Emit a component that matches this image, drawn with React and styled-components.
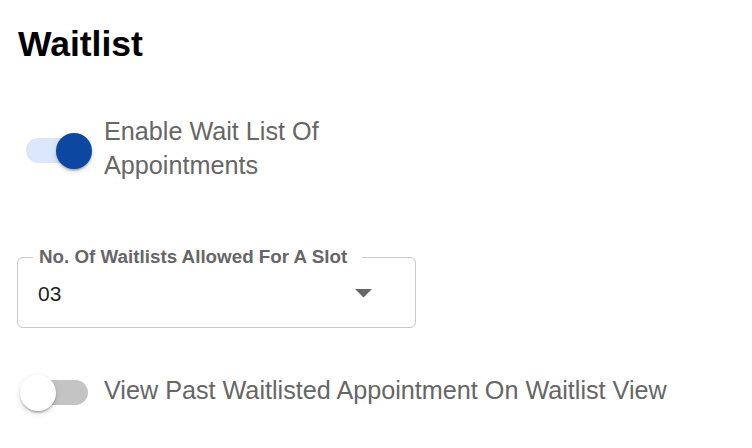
import styled, { createGlobalStyle } from 'styled-components'

const GlobalStyle = createGlobalStyle`
  html, body {
    margin: 0;
    background: #fff;
  }
  body {
    font-family: "Liberation Sans", Arial, Helvetica, sans-serif;
  }
`

const Page = styled.div`
  width: 752px;
  height: 448px;
  box-sizing: border-box;
  padding: 21.5px 0 0 17px;
  overflow: hidden;
`

const Title = styled.h1`
  margin: 0 0 0 1px;
  font-size: 35.5px;
  line-height: 44px;
  font-weight: 700;
  color: #000;
`

const Row = styled.label`
  display: flex;
  align-items: center;
  gap: 12px;
  margin-top: ${(p) => p.$top}px;
  cursor: pointer;
`

const Text = styled.span`
  max-width: ${(p) => p.$max || 'none'};
  font-size: 25.2px;
  line-height: 34px;
  color: #666;
`

// switch: track + thumb lying over it
const SwitchBox = styled.span`
  position: relative;
  flex: none;
  width: 72px;
  height: 36px;
  margin: 5px 0 0 3px;
`

const Track = styled.span`
  position: absolute;
  left: 5.5px;
  right: 4px;
  top: 5.5px;
  height: 25px;
  border-radius: 13px;
  background: ${(p) => (p.$on ? '#dbe7fb' : '#c4c4c4')};
`

const Thumb = styled.span`
  position: absolute;
  top: 0;
  left: ${(p) => (p.$on ? '36px' : '0')};
  width: 36px;
  height: 36px;
  border-radius: 50%;
  background: ${(p) => (p.$on ? '#0c47a1' : '#fff')};
  box-shadow: 0 3px 2px -2px rgba(0, 0, 0, 0.2), 0 2px 2px 0 rgba(0, 0, 0, 0.14),
    0 2px 6px 0 rgba(0, 0, 0, 0.14);
`

const Switch = ({ on }) => (
  <SwitchBox>
    <Track $on={on} />
    <Thumb $on={on} />
  </SwitchBox>
)

const Field = styled.fieldset`
  box-sizing: border-box;
  width: 399px;
  margin: 65px 0 0 0;
  padding: 0 15px 21px 15px;
  border: 1px solid #c8c8c8;
  border-radius: 6px;
`

const Legend = styled.legend`
  padding: 0 15px 0 6px;
  font-size: 18.8px;
  line-height: 20px;
  font-weight: 700;
  color: #666;
`

const SelectRow = styled.div`
  display: flex;
  align-items: center;
  justify-content: space-between;
  height: 24px;
  margin-top: 14.5px;
  padding: 0 28px 0 5px;
`

const Value = styled.span`
  font-size: 21px;
  line-height: 24px;
  color: #1f1f1f;
`

const Arrow = () => (
  <svg width="17" height="9" viewBox="0 0 17 9">
    <polygon points="0,0 17,0 8.5,8.5" fill="#666" />
  </svg>
)

const App = () => {
  return (
    <Page>
      <GlobalStyle />
      <Title>Waitlist</Title>

      <Row $top={48.8}>
        <Switch on />
        <Text $max="240px">Enable Wait List Of Appointments</Text>
      </Row>

      <Field>
        <Legend>No. Of Waitlists Allowed For A Slot</Legend>
        <SelectRow>
          <Value>03</Value>
          <Arrow />
        </SelectRow>
      </Field>

      <Row $top={42}>
        <Switch />
        <Text>View Past Waitlisted Appointment On Waitlist View</Text>
      </Row>
    </Page>
  )
}

export default App
